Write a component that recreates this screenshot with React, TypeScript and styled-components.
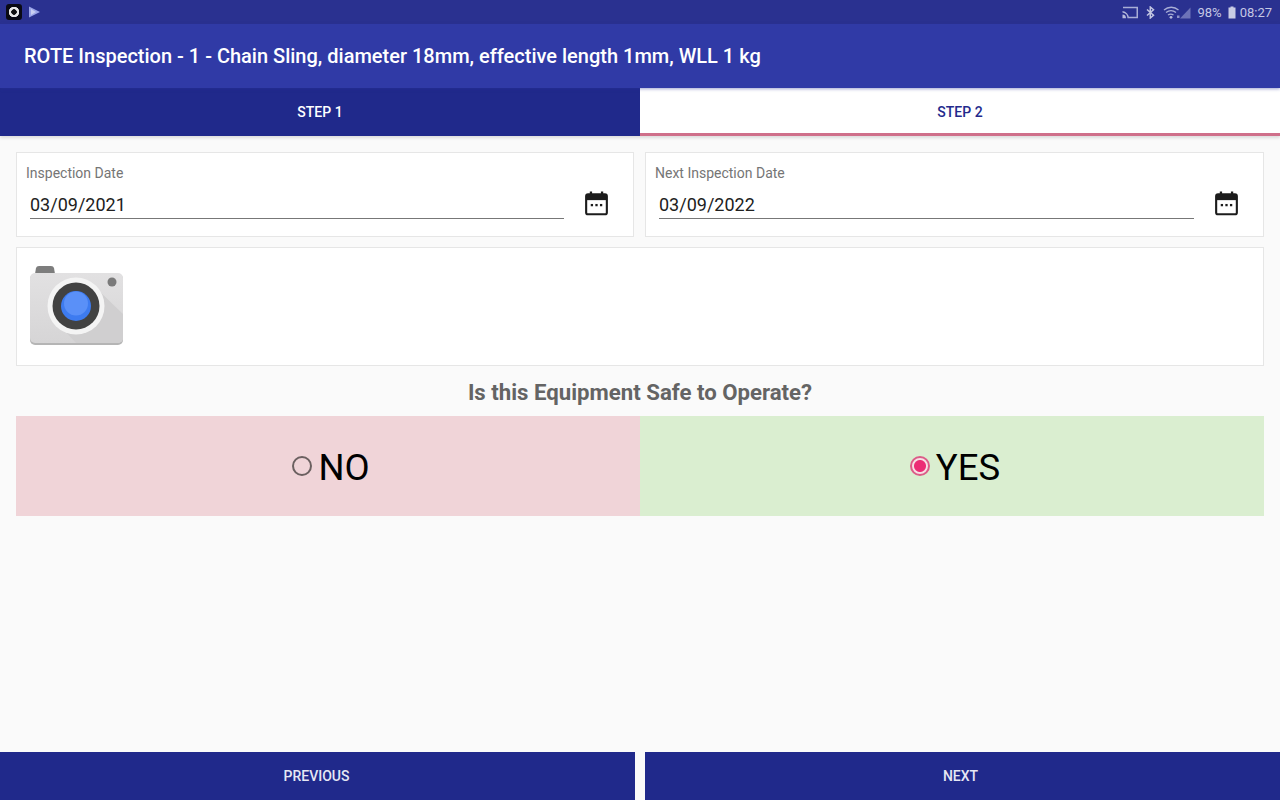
import styled, { createGlobalStyle } from 'styled-components'

const GlobalStyle = createGlobalStyle`
  html, body {
    margin: 0;
    padding: 0;
    background: #fafafa;
    font-family: Roboto, "Liberation Sans", sans-serif;
  }
  * {
    box-sizing: border-box;
  }
`

function CalendarIcon() {
  return (
    <svg width="23" height="26" viewBox="0 0 24 26">
      <rect x="1.2" y="4" width="21.6" height="20.8" rx="2" fill="none" stroke="#1c1c1c" strokeWidth="2.2" />
      <rect x="1.2" y="4" width="21.6" height="6" fill="#1c1c1c" />
      <rect x="5" y="1" width="2.4" height="4" fill="#1c1c1c" />
      <rect x="16.6" y="1" width="2.4" height="4" fill="#1c1c1c" />
      <rect x="6" y="14" width="2.4" height="2.4" fill="#1c1c1c" />
      <rect x="10.8" y="14" width="2.4" height="2.4" fill="#1c1c1c" />
      <rect x="15.6" y="14" width="2.4" height="2.4" fill="#1c1c1c" />
    </svg>
  )
}

function CameraLogo() {
  return (
    <svg width="94" height="80" viewBox="0 0 94 80">
      <defs>
        <clipPath id="body">
          <rect x="0" y="7" width="93" height="70" rx="5" />
        </clipPath>
        <linearGradient id="bodyFill" x1="0" y1="0" x2="0" y2="1">
          <stop offset="0" stopColor="#e2e1e2" />
          <stop offset="1" stopColor="#d6d5d6" />
        </linearGradient>
      </defs>
      <path d="M5 8 L6 2 Q6.500 0 9 0 L21 0 Q23.500 0 24 2 L25 8 Z" fill="#7d7d7d" />
      <rect x="0" y="8" width="93" height="71" rx="5" fill="#b5b5b5" />
      <rect x="0" y="7" width="93" height="70" rx="5" fill="url(#bodyFill)" />
      <path d="M64 20 L93 48 L93 77 L46 77 L30 60 Z" fill="#d0cfd0" clipPath="url(#body)" />
      <circle cx="46" cy="40" r="28.500" fill="#f4f4f4" />
      <circle cx="46" cy="40" r="23.500" fill="#424242" />
      <circle cx="46" cy="40" r="15" fill="#3d7bf0" />
      <circle cx="46" cy="37.500" r="12" fill="#5a90f8" />
      <circle cx="82" cy="16" r="4.500" fill="#7a7a7a" />
    </svg>
  )
}

function CastIcon() {
  return (
    <svg width="18" height="13" viewBox="0 0 18 13">
      <path d="M1 0.700 H16 V12.300 H7 V10.800 H14.500 V2.200 H1 Z" fill="#a9aed6" />
      <path d="M0.500 3.500 V5 A7.500 7.500 0 0 1 7 12.300 H5.500 A6 6 0 0 0 0.500 6.500 V8.500 A3.800 3.800 0 0 1 4 12.300 H0.500 Z" fill="#b7bbdc" />
    </svg>
  )
}

function BluetoothIcon() {
  return (
    <svg width="9" height="13" viewBox="0 0 9 13">
      <path d="M1 3.500 L7.500 9.300 L4.300 12 V1 L7.500 3.700 L1 9.500" fill="none" stroke="#c3c6e2" strokeWidth="1.500" />
    </svg>
  )
}

function WifiIcon() {
  return (
    <svg width="19" height="13" viewBox="-2 0 19 13">
      <path d="M1 4 A11 11 0 0 1 15.500 4 M3 6.500 A8 8 0 0 1 13 6.500 M5 9 A5 5 0 0 1 10.500 9" fill="none" stroke="#a9aed6" strokeWidth="1.300" />
      <circle cx="8" cy="11.300" r="1.400" fill="#b7bbdc" />
      <rect x="14" y="9.500" width="2.500" height="2.500" fill="#8d92c8" />
    </svg>
  )
}

function SignalIcon() {
  return (
    <svg width="11" height="13" viewBox="0 0 11 13">
      <path d="M0 12.500 L10.500 1.500 V12.500 Z" fill="#6d73b8" />
    </svg>
  )
}

function BatteryIcon() {
  return (
    <svg width="8" height="13" viewBox="0 0 8 13">
      <path d="M2.500 0.500 H5.500 V1.500 H7.500 V12.500 H0.500 V1.500 H2.500 Z" fill="#c9cce5" />
    </svg>
  )
}

function PlayIcon() {
  return (
    <svg width="13" height="12" viewBox="0 0 13 12">
      <path d="M1 0.500 L12 6 L1 11.500 Z" fill="#9aa4e8" />
      <path d="M3 3 L8 6 L3 9 Z" fill="#c9cff2" />
    </svg>
  )
}

function DateCard({ label, value }: { label: string; value: string }) {
  return (
    <Card>
      <FieldLabel>{label}</FieldLabel>
      <FieldRow>
        <FieldValue>{value}</FieldValue>
        <CalendarSlot>
          <CalendarIcon />
        </CalendarSlot>
      </FieldRow>
    </Card>
  )
}

export default function App() {
  return (
    <Page>
      <GlobalStyle />
      <StatusBar>
        <StatusGroup>
          <AppBadge />
          <PlayIcon />
        </StatusGroup>
        <StatusGroup>
          <CastIcon />
          <BluetoothIcon />
          <TightGroup>
            <WifiIcon />
            <SignalIcon />
          </TightGroup>
          <StatusText>98%</StatusText>
          <ClockGroup>
            <BatteryIcon />
            <StatusText>08:27</StatusText>
          </ClockGroup>
        </StatusGroup>
      </StatusBar>
      <AppBar>ROTE Inspection - 1 - Chain Sling, diameter 18mm, effective length 1mm, WLL 1 kg</AppBar>
      <Tabs>
        <Tab>STEP 1</Tab>
        <Tab $active>STEP 2</Tab>
      </Tabs>
      <Content>
        <DateRow>
          <DateCard label="Inspection Date" value="03/09/2021" />
          <DateCard label="Next Inspection Date" value="03/09/2022" />
        </DateRow>
        <PhotoCard>
          <CameraLogo />
        </PhotoCard>
        <Question>Is this Equipment Safe to Operate?</Question>
        <Choices>
          <Choice $tint="#f0d4d8">
            <Radio />
            NO
          </Choice>
          <Choice $tint="#daeed0">
            <Radio $checked />
            YES
          </Choice>
        </Choices>
      </Content>
      <Footer>
        <FooterButton $nudge={2}>PREVIOUS</FooterButton>
        <FooterButton $nudge={4}>NEXT</FooterButton>
      </Footer>
    </Page>
  )
}

const Page = styled.div`
  width: 1280px;
  height: 800px;
  display: flex;
  flex-direction: column;
  overflow: hidden;
  background: #fafafa;
`
const StatusBar = styled.div`
  height: 24px;
  flex: none;
  background: #2a3190;
  display: flex;
  align-items: center;
  justify-content: space-between;
  padding: 0 8px 0 6px;
`
const StatusGroup = styled.div`
  display: flex;
  align-items: center;
  gap: 6px;
`
const TightGroup = styled.div`
  display: flex;
  align-items: center;
`
const ClockGroup = styled.div`
  display: flex;
  align-items: center;
  gap: 4px;
`
const AppBadge = styled.span`
  width: 16px;
  height: 16px;
  border-radius: 3px;
  background: radial-gradient(circle, #111 0 2.500px, #e8e8e8 3px 5px, #0a0a14 5.500px);
`
const StatusText = styled.span`
  font-size: 13px;
  color: #c5c8e4;
`
const AppBar = styled.div`
  height: 64px;
  flex: none;
  position: relative;
  z-index: 1;
  background: #303aa6;
  color: #fff;
  font-size: 20px;
  font-weight: 500;
  display: flex;
  align-items: center;
  padding: 0 24px;
  box-shadow: 0 1px 3px rgba(40, 50, 150, 0.45);
`
const Tabs = styled.div`
  height: 48px;
  flex: none;
  display: flex;
  box-shadow: 0 2px 3px rgba(0, 0, 0, 0.12);
`
const Tab = styled.div<{ $active?: boolean }>`
  flex: 1;
  display: flex;
  align-items: center;
  justify-content: center;
  font-size: 14px;
  font-weight: 500;
  padding-top: ${({ $active }) => ($active ? '3px' : '0')};
  color: ${({ $active }) => ($active ? '#232a8c' : '#fff')};
  background: ${({ $active }) => ($active ? '#fff' : '#20298b')};
  border-bottom: ${({ $active }) => ($active ? '3px solid #cf6f8a' : 'none')};
`
const Content = styled.div`
  flex: 1;
  display: flex;
  flex-direction: column;
  padding: 16px 16px 0;
`
const DateRow = styled.div`
  display: grid;
  grid-template-columns: 618px 619px;
  column-gap: 11px;
`
const Card = styled.div`
  height: 85px;
  background: #fff;
  border: 1px solid #e6e6e6;
  padding: 12px 25px 0 9px;
`
const FieldLabel = styled.div`
  font-size: 14px;
  line-height: 16px;
  color: #757575;
`
const FieldRow = styled.div`
  display: flex;
  align-items: center;
  gap: 21px;
  margin-top: 7px;
  padding-left: 4px;
`
const FieldValue = styled.div`
  flex: 1;
  height: 31px;
  font-size: 18px;
  line-height: 34px;
  color: #212121;
  border-bottom: 1px solid #777;
`
const CalendarSlot = styled.span`
  display: flex;
  margin-bottom: 2px;
`
const PhotoCard = styled.div`
  height: 119px;
  margin-top: 10px;
  background: #fff;
  border: 1px solid #e6e6e6;
  padding: 18px 13px 0;
`
const Question = styled.div`
  height: 50px;
  padding-top: 2px;
  display: flex;
  align-items: center;
  justify-content: center;
  font-size: 22.2px;
  font-weight: 700;
  color: #646464;
`
const Choices = styled.div`
  display: grid;
  grid-template-columns: 1fr 1fr;
`
const Choice = styled.div<{ $tint: string }>`
  height: 100px;
  display: flex;
  align-items: center;
  justify-content: center;
  gap: 6px;
  padding: 2px 0 0 6px;
  background: ${({ $tint }) => $tint};
  font-size: 36.5px;
  color: #000;
`
const Radio = styled.span<{ $checked?: boolean }>`
  width: 20px;
  height: 20px;
  margin-top: -3px;
  border-radius: 50%;
  border: 2px solid ${({ $checked }) => ($checked ? '#dc5c88' : '#6b6060')};
  background: ${({ $checked }) =>
    $checked ? 'radial-gradient(circle, #ec2d75 0 5.500px, #f7e0e4 6.500px)' : 'transparent'};
`
const Footer = styled.div`
  height: 48px;
  flex: none;
  display: grid;
  grid-template-columns: 635px 635px;
  column-gap: 10px;
`
const FooterButton = styled.div<{ $nudge: number }>`
  display: flex;
  align-items: center;
  justify-content: center;
  padding-right: ${({ $nudge }) => $nudge}px;
  background: #20298b;
  color: #e6e7f4;
  font-size: 14px;
  font-weight: 500;
`
